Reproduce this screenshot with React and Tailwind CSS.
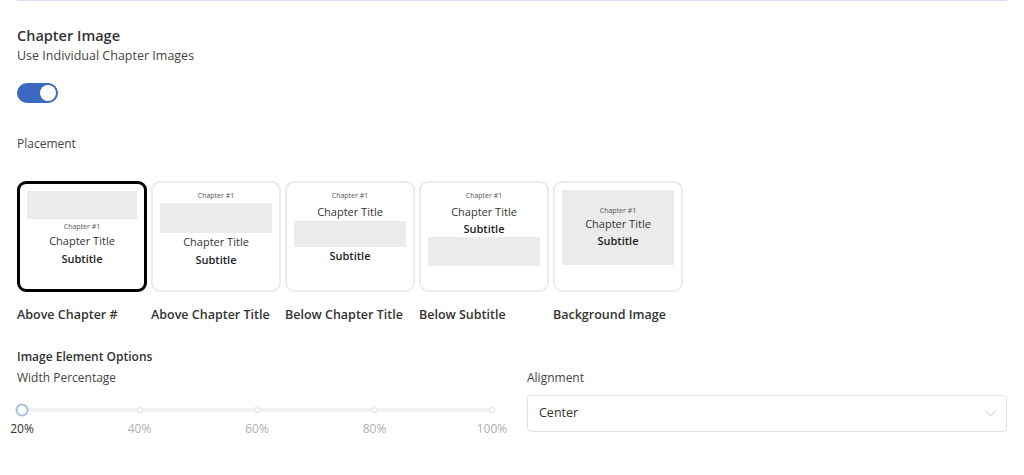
import React from "react";

const font = { fontFamily: '"Open Sans", "Noto Sans", sans-serif' };

function Small() {
  return <div className="h-[10px] text-[7px] leading-[10px] text-[#555]">Chapter #1</div>;
}
function Title({ cls = "h-[18px] leading-[18px]" }) {
  return <div className={`text-[11px] text-[#333] ${cls}`}>Chapter Title</div>;
}
function Sub({ cls = "h-[18px] leading-[18px]" }) {
  return <div className={`text-[11px] font-semibold text-[#222] ${cls}`}>Subtitle</div>;
}

const cards = [
  {
    label: "Above Chapter #",
    selected: true,
    body: (
      <>
        <div className="w-full h-[28px] bg-[#ebebeb]" />
        <div className="mt-[3px]" />
        <Small />
        <Title />
        <Sub />
      </>
    ),
  },
  {
    label: "Above Chapter Title",
    body: (
      <>
        <div className="mt-px" />
        <Small />
        <div className="mt-[2px] w-full h-[30px] bg-[#ebebeb]" />
        <Title />
        <Sub />
      </>
    ),
  },
  {
    label: "Below Chapter Title",
    body: (
      <>
        <div className="mt-px" />
        <Small />
        <div className="mt-[2px]" />
        <Title />
        <div className="w-full h-[26px] bg-[#ebebeb]" />
        <Sub />
      </>
    ),
  },
  {
    label: "Below Subtitle",
    body: (
      <>
        <div className="mt-px" />
        <Small />
        <div className="mt-[2px]" />
        <Title />
        <Sub cls="h-[16px] leading-[16px]" />
        <div className="w-full h-[29px] bg-[#ebebeb]" />
      </>
    ),
  },
  {
    label: "Background Image",
    body: (
      <div className="w-full h-[75px] bg-[#ebebeb] flex flex-col items-center justify-center">
        <div className="text-[7px] leading-[10px] text-[#555]">Chapter #1</div>
        <div className="text-[11px] leading-[16px] text-[#333]">Chapter Title</div>
        <div className="text-[11px] leading-[18px] font-semibold text-[#222]">Subtitle</div>
      </div>
    ),
  },
];

export default function App() {
  return (
    <div className="w-[1024px] h-[475px] bg-white px-[17px]" style={font}>
      <div className="h-px bg-[#d5e1f3]" />
      <div className="mt-[25px] text-[14.5px] leading-[20px] font-semibold text-[#333]">Chapter Image</div>
      <div className="mt-px text-[12.5px] leading-[18px] text-[#444]">Use Individual Chapter Images</div>
      <div className="mt-[18px] w-[41px] h-[20px] rounded-full bg-[#3b69c2] flex items-center justify-end pr-[2px]">
        <div className="w-[16px] h-[16px] rounded-full bg-white" />
      </div>
      <div className="mt-[32px] text-[12px] leading-[18px] text-[#444]">Placement</div>
      <div className="mt-[28px] flex gap-[4px]">
        {cards.map((c) => (
          <div key={c.label} className="w-[130px] flex flex-col">
            <div
              className={`h-[111px] rounded-[9px] px-[7px] pt-[7px] flex flex-col items-center text-center ${
                c.selected ? "border-[3px] border-black" : "border-2 border-[#ececec]"
              }`}
            >
              {c.body}
            </div>
            <div className="mt-[14px] h-[18px] text-[12.5px] leading-[18px] font-semibold text-[#333] whitespace-nowrap">
              {c.label}
            </div>
          </div>
        ))}
      </div>
      <div className="mt-[24px] text-[12px] leading-[18px] font-semibold text-[#333]">Image Element Options</div>
      <div className="mt-[3px] flex gap-[30px]">
        <div className="w-[480px]">
          <div className="text-[12px] leading-[18px] text-[#444]">Width Percentage</div>
          <div className="mt-[15px] relative h-[16px] mx-[5px]">
            <div className="absolute left-0 right-0 top-[6px] h-[4px] rounded-full bg-[#f1f1f1]" />
            {[0, 1, 2, 3, 4].map((i) => (
              <div
                key={i}
                className="absolute top-1/2 -translate-x-1/2 -translate-y-1/2"
                style={{ left: `${i * 25}%` }}
              >
                {i === 0 ? (
                  <div className="w-[13px] h-[13px] rounded-full bg-white border-2 border-[#a6bfe3]" />
                ) : (
                  <div className="w-[7px] h-[7px] rounded-full bg-white border-2 border-[#ededed]" />
                )}
              </div>
            ))}
          </div>
          <div className="relative h-[16px] mx-[5px] mt-[3px]">
            {["20%", "40%", "60%", "80%", "100%"].map((t, i) => (
              <div
                key={t}
                className={`absolute top-0 -translate-x-1/2 text-[12px] leading-[16px] ${
                  i === 0 ? "text-[#333]" : "text-[#b0b0b0]"
                }`}
                style={{ left: `${i * 25}%` }}
              >
                {t}
              </div>
            ))}
          </div>
        </div>
        <div className="w-[480px]">
          <div className="text-[12px] leading-[18px] text-[#444]">Alignment</div>
          <div className="mt-[8px] h-[37px] rounded-[4px] border border-[#e3e3e3] flex items-center justify-between pl-[11px] pr-[10px]">
            <span className="text-[12.5px] text-[#333]">Center</span>
            <svg width="11" height="7" viewBox="0 0 11 7" fill="none">
              <path d="M0.5 0.8L5.5 5.8L10.5 0.8" stroke="#c4c4c4" strokeWidth="1" />
            </svg>
          </div>
        </div>
      </div>
    </div>
  );
}
